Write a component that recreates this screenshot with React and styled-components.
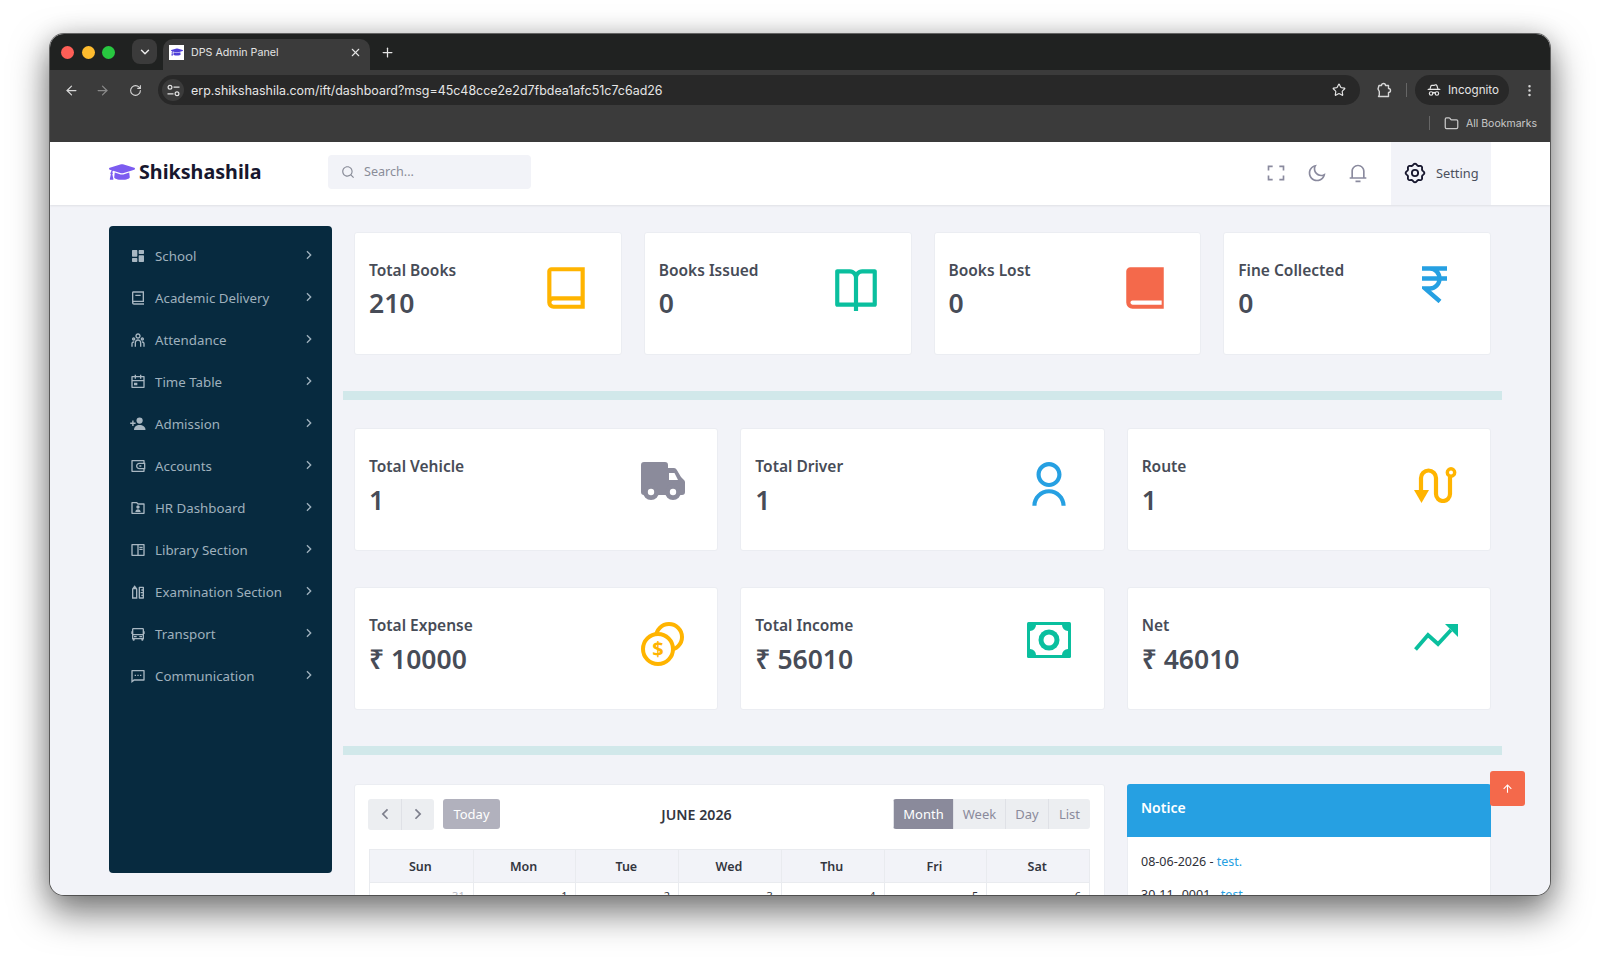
import React from 'react';
import styled, { createGlobalStyle } from 'styled-components';
import {
  RiDashboardFill, RiBook2Line, RiTeamLine, RiCalendarEventLine, RiWallet3Line,
  RiFolderUserLine, RiBookReadLine, RiPencilRulerLine, RiBusLine, RiMessage2Line, RiArrowRightSLine,
  RiArrowLeftSLine, RiSearchLine, RiFullscreenLine, RiMoonLine, RiNotification3Line,
  RiBookOpenLine, RiUserLine, RiArrowUpLine,
} from 'react-icons/ri';
import { FaGraduationCap } from 'react-icons/fa';
import { ArrowLeft, ArrowRight, RotateCw, ChevronDown, X, Plus, Star, EllipsisVertical, Folder, HatGlasses } from 'lucide-react';

const Global = createGlobalStyle`
  html, body { margin: 0; padding: 0; background: #fff; }
  body { height: 961px; overflow: hidden; font-family: "Noto Sans", "Open Sans", sans-serif; }
  * { box-sizing: border-box; }
`;

const Stage = styled.div`
  padding: 34px 50px 0;
  height: 961px;
  overflow: hidden;
`;
const Win = styled.div`
  position: relative;
  width: 1500px;
  height: 861px;
  border-radius: 14px;
  overflow: hidden;
  background: #f2f3f8;
`;
const WinShadow = styled.div`
  border-radius: 14px;
  box-shadow: 0 0 0 1px rgba(60,60,60,.75), 0 16px 36px 2px rgba(0,0,0,.52), 0 0 24px rgba(0,0,0,.12);
`;

/* browser chrome */
const TabStrip = styled.div`
  height: 36px;
  background: #202221;
  display: flex;
  align-items: flex-end;
  padding-left: 11px;
`;
const Lights = styled.div`
  display: flex;
  gap: 7.5px;
  align-self: center;
  margin-top: 1px;
  width: 71px;
`;
const Light = styled.span`
  width: 13px;
  height: 13px;
  border-radius: 50%;
  background: ${p => p.$c};
`;
const TabSearch = styled.div`
  width: 25px;
  height: 25px;
  margin-bottom: 6px;
  border-radius: 8px;
  background: #3b3b3b;
  color: #e8e8e8;
  display: flex;
  align-items: center;
  justify-content: center;
`;
const Tab = styled.div`
  width: 207px;
  height: 31px;
  margin-left: 6px;
  padding: 0 8px 5px 6px;
  background: #3b3b3b;
  border-radius: 10px 10px 0 0;
  display: flex;
  align-items: center;
  color: #e4e4e4;
  font: 400 10.7px Inter, "Liberation Sans", sans-serif;
`;
const Favicon = styled.span`
  width: 15px;
  height: 15px;
  background: #fff;
  display: flex;
  align-items: center;
  justify-content: center;
  color: #4f3fd8;
  margin-right: 7px;
`;
const TabTitle = styled.span`
  flex: 1;
`;
const NewTab = styled.div`
  color: #e4e4e4;
  margin: 0 0 10px 10px;
  display: flex;
`;
const Toolbar = styled.div`
  height: 38px;
  background: #3b3b3b;
  display: flex;
  align-items: center;
  padding-top: 2px;
  color: #d6d6d6;
`;
const NavSlot = styled.div`
  width: ${p => p.$w}px;
  display: flex;
  justify-content: center;
  color: ${p => p.$dim ? '#8a8a8a' : '#d6d6d6'};
`;
const Omnibox = styled.div`
  width: 1202px;
  height: 30px;
  margin-left: 0;
  border-radius: 15px;
  background: #282828;
  display: flex;
  align-items: center;
  padding: 0 14px 0 4px;
  color: #e4e4e4;
`;
const TuneBadge = styled.span`
  width: 22px;
  height: 22px;
  border-radius: 50%;
  background: #3b3b3b;
  display: flex;
  align-items: center;
  justify-content: center;
  margin-right: 7px;
`;
const Url = styled.span`
  flex: 1;
  font: 400 12.45px Inter, "Liberation Sans", sans-serif;
  color: #e6e6e6;
`;
const ToolDivider = styled.span`
  width: 1px;
  height: 14px;
  background: #666;
`;
const IncognitoPill = styled.div`
  width: 94px;
  height: 30px;
  border-radius: 15px;
  background: #282828;
  display: flex;
  align-items: center;
  gap: 7px;
  padding-left: 12px;
  color: #e4e4e4;
  font: 400 11.6px Inter, "Liberation Sans", sans-serif;
`;
const BookmarksBar = styled.div`
  height: 34px;
  background: #3b3b3b;
  display: flex;
  justify-content: flex-end;
  align-items: center;
  padding: 0 13px 4px 0;
  color: #c9c9c9;
  font: 400 10.5px Inter, "Liberation Sans", sans-serif;
  gap: 7px;
`;
const BarDivider = styled.span`
  width: 1px;
  height: 14px;
  background: #666;
  margin-right: 7px;
`;

/* app header */
const AppHeader = styled.header`
  height: 63px;
  background: #fff;
  display: flex;
  align-items: center;
  box-shadow: 0 1px 2px rgba(0,0,0,.08);
  position: relative;
`;
const Brand = styled.div`
  width: 278px;
  padding-left: 59px;
  margin-bottom: 4px;
  display: flex;
  align-items: center;
  gap: 4px;
  font-size: 19.7px;
  font-weight: 700;
  color: #17172e;
  svg { color: #7c5cf0; }
`;
const SearchBox = styled.div`
  width: 203px;
  height: 34px;
  margin-bottom: 4px;
  background: #f2f3f8;
  border-radius: 4px;
  display: flex;
  align-items: center;
  padding-left: 13px;
  gap: 9px;
  color: #8a8d99;
  font-size: 12.6px;
`;
const HeadActions = styled.div`
  margin-left: auto;
  height: 100%;
  display: flex;
  align-items: center;
  margin-right: 59px;
`;
const HeadIcon = styled.span`
  display: flex;
  width: 41px;
  margin-bottom: 2px;
  justify-content: center;
  color: #8a8a9e;
`;
const SettingBtn = styled.div`
  width: 100px;
  height: 100%;
  margin-left: 13px;
  padding: 0 0 2px 13px;
  background: #f2f3f8;
  display: flex;
  align-items: center;
  gap: 10px;
  color: #4b4f5c;
  font-size: 12.8px;
  svg { color: #17172e; }
`;

/* body */
const Body = styled.div`
  display: flex;
  padding-left: 59px;
  align-items: flex-start;
`;
const Sidebar = styled.nav`
  width: 223px;
  height: 647px;
  flex: none;
  margin-top: 21px;
  padding-top: 9px;
  background: #072a3f;
  border-radius: 4px;
`;
const NavRow = styled.div`
  height: 42px;
  display: flex;
  align-items: center;
  padding-left: 21px;
  padding-right: 15px;
  color: #9fb1bd;
  font-size: 13.3px;
`;
const NavIcon = styled.span`
  width: 25px;
  display: flex;
  color: #a8b7c2;
`;
const NavLabel = styled.span`
  flex: 1;
`;
const NavChevron = styled.span`
  display: flex;
  margin-bottom: 2px;
`;
const Main = styled.main`
  width: 1159px;
  margin-left: 11px;
  padding: 27px 11px 0;
  flex: none;
`;
const CardRow = styled.div`
  display: grid;
  grid-template-columns: repeat(${p => p.$n}, 1fr);
  column-gap: 22px;
  margin-top: ${p => p.$top || 0}px;
`;
const Card = styled.div`
  height: 123px;
  background: #fff;
  border: 1px solid #ebedf2;
  border-radius: 3px;
  display: flex;
  justify-content: space-between;
  padding: 26px 29px 0 14px;
`;
const CardTitle = styled.div`
  font-size: 15.5px;
  font-weight: 600;
  line-height: 22px;
  color: #474c57;
`;
const CardValue = styled.div`
  font-size: 26.5px;
  font-weight: 600;
  line-height: 36px;
  margin-top: ${p => p.$top}px;
  color: #474c57;
`;
const CardIcon = styled.span`
  width: 50px;
  height: 50px;
  margin-top: ${p => p.$top}px;
  margin-right: ${p => p.$right}px;
  display: flex;
  align-items: center;
  justify-content: center;
  color: ${p => p.$c};
`;
const Divider = styled.div`
  height: 9px;
  background: #d1e8ea;
  margin: ${p => p.$top}px -11px ${p => p.$bottom}px;
`;
const Bottom = styled.div`
  display: grid;
  grid-template-columns: 751px 364px;
  column-gap: 22px;
`;
const CalendarCard = styled.div`
  height: 400px;
  background: #fff;
  border: 1px solid #ebedf2;
  border-radius: 3px;
  padding: 13px 14px;
`;
const CalToolbar = styled.div`
  display: flex;
  justify-content: space-between;
  align-items: center;
  height: 32px;
`;
const CalLeft = styled.div`
  display: flex;
  gap: 9px;
  margin-left: -1px;
`;
const Pager = styled.div`
  display: flex;
  border-radius: 3px;
  overflow: hidden;
`;
const PageBtn = styled.span`
  width: 33px;
  height: 31px;
  background: #eceef1;
  color: #7d7f8c;
  display: flex;
  align-items: center;
  justify-content: center;
  border-left: ${p => p.$sep ? '1px solid #dfe1e6' : 'none'};
`;
const TodayBtn = styled.span`
  width: 57px;
  height: 30px;
  background: #b1b1bd;
  color: #fff;
  border-radius: 3px;
  display: flex;
  align-items: center;
  justify-content: center;
  font-size: 13px;
`;
const CalTitle = styled.div`
  font-size: 14.2px;
  font-weight: 600;
  color: #33363f;
`;
const ViewGroup = styled.div`
  display: flex;
  border-radius: 3px;
  overflow: hidden;
`;
const ViewBtn = styled.span`
  width: ${p => p.$w}px;
  height: 30px;
  display: flex;
  align-items: center;
  justify-content: center;
  font-size: 13px;
  background: ${p => p.$on ? '#8a8a9b' : '#eceef1'};
  color: ${p => p.$on ? '#fff' : '#8a8a9b'};
  border-left: 1px solid #dfe1e6;
`;
const CalGrid = styled.div`
  margin-top: 19px;
  border: 1px solid #e9ebef;
  border-bottom: none;
  display: grid;
  grid-template-columns: repeat(7, 1fr);
`;
const DayHead = styled.div`
  height: 33px;
  padding-right: 2px;
  background: #f2f3f8;
  border-left: ${p => p.$first ? 'none' : '1px solid #e9ebef'};
  border-bottom: 1px solid #e9ebef;
  display: flex;
  align-items: center;
  justify-content: center;
  font-size: 12.5px;
  font-weight: 600;
  color: #33363f;
`;
const DayCell = styled.div`
  height: 80px;
  border-left: ${p => p.$first ? 'none' : '1px solid #e9ebef'};
  padding: 5px 8px;
  text-align: right;
  font-size: 11px;
  color: ${p => p.$muted ? '#b5b6c0' : '#33363f'};
`;
const NoticeCard = styled.div`
  height: 400px;
  background: #fff;
  border: 1px solid #ebedf2;
  border-top: none;
  border-radius: 3px 3px 0 0;
`;
const NoticeHead = styled.div`
  height: 53px;
  margin: 0 -1px;
  padding: 0 14px 6px;
  display: flex;
  align-items: center;
  background: #26a0e2;
  border-radius: 3px 3px 0 0;
  color: #fff;
  font-size: 14px;
  font-weight: 600;
`;
const NoticeList = styled.div`
  padding: 15px 13px;
`;
const NoticeLine = styled.div`
  line-height: 20px;
  margin-bottom: 13px;
  font-size: 12.5px;
  color: #2e3038;
  a { color: #26a0e2; text-decoration: none; }
`;
const ScrollTop = styled.div`
  position: absolute;
  left: 1440px;
  top: 737px;
  width: 35px;
  height: 35px;
  background: #f4694b;
  border-radius: 3px;
  color: #fff;
  display: flex;
  align-items: center;
  justify-content: center;
`;

/* drawn icons */
const BookOutline = () => (
  <svg width="50" height="50" viewBox="0 0 24 24" fill="currentColor" fillRule="evenodd">
    <path d="M5 2h16v20H6a3 3 0 0 1-3-3V4a2 2 0 0 1 2-2zM5 4v12.05c.16-.03.33-.05.5-.05H19V4zM6 18a1 1 0 0 0 0 2h13v-2z" />
  </svg>
);
const BookSolid = () => (
  <svg width="50" height="50" viewBox="0 0 24 24" fill="currentColor" fillRule="evenodd">
    <path d="M5 2h16v20H6a3 3 0 0 1-3-3V4a2 2 0 0 1 2-2zM6 18a1 1 0 0 0 0 2h14v-2z" />
  </svg>
);
const RupeeIcon = () => (
  <svg width="29" height="37" viewBox="0 0 29 37" fill="none" stroke="currentColor" strokeWidth="4.4">
    <path d="M0 2.5H25M0 12.5H25M1 2.5h7a9.5 10 0 0 1 0 20H3L18 35.5" />
  </svg>
);
const TruckIcon = () => (
  <svg width="44" height="38" viewBox="0 0 44 38">
    <path fill="currentColor" d="M3 0H24a3 3 0 0 1 3 3V6h6a3 3 0 0 1 2.7 1.7L40 15l3 3a3 3 0 0 1 1 2.2V30a3 3 0 0 1-3 3H3a3 3 0 0 1-3-3V3a3 3 0 0 1 3-3z" />
    <path fill="#fff" d="M28 11h5.5l3.5 7h-9z" />
    <circle cx="10" cy="30" r="8" fill="currentColor" />
    <circle cx="32" cy="30" r="8" fill="currentColor" />
    <circle cx="10" cy="30" r="3.2" fill="#fff" />
    <circle cx="32" cy="30" r="3.2" fill="#fff" />
  </svg>
);
const RouteIcon = () => (
  <svg width="44" height="36" viewBox="0 0 44 36" fill="none" stroke="currentColor" strokeWidth="4.2">
    <path d="M7 25V11a7.5 7.5 0 0 1 15 0v16a7 7 0 0 0 14 0V10" />
    <circle cx="37" cy="5.5" r="3.7" strokeWidth="3.4" />
    <path d="M0 23h15L7.5 36z" fill="currentColor" stroke="none" />
  </svg>
);
const CoinsIcon = () => (
  <svg width="44" height="44" viewBox="0 0 44 44" fill="none" stroke="currentColor" strokeWidth="4">
    <circle cx="28" cy="15" r="13" />
    <circle cx="17" cy="27" r="15" fill="#fff" />
    <text x="17" y="34" textAnchor="middle" fontSize="20" fontWeight="700" fill="currentColor" stroke="none" fontFamily="Noto Sans">$</text>
  </svg>
);
const CashIcon = () => (
  <svg width="44" height="36" viewBox="0 0 44 36">
    <rect width="44" height="36" rx="1.5" fill="currentColor" />
    <path d="M9 3H35a6 6 0 0 0 6 6V27a6 6 0 0 0-6 6H9a6 6 0 0 0-6-6V9a6 6 0 0 0 6-6z" fill="#fff" />
    <circle cx="22" cy="18" r="10.5" fill="currentColor" />
    <circle cx="22" cy="18" r="5.5" fill="#fff" />
  </svg>
);
const TrendIcon = () => (
  <svg width="44" height="27" viewBox="0 0 44 27" fill="none" stroke="currentColor" strokeWidth="3.8">
    <path d="M1.5 25.5L14 11l10 9L37 6" />
    <path d="M31 0h13v13z" fill="currentColor" stroke="none" />
  </svg>
);
const gearPath = Array.from({ length: 97 }, (_, i) => {
  const t = (i / 96) * Math.PI * 2;
  const r = 9.3 + 0.9 * Math.cos(8 * t);
  return `${i ? 'L' : 'M'}${(12 + r * Math.sin(t)).toFixed(2)} ${(12 - r * Math.cos(t)).toFixed(2)}`;
}).join('') + 'z';
const GearIcon = () => (
  <svg width="22" height="22" viewBox="0 0 24 24" fill="none" stroke="currentColor" strokeWidth="2">
    <path d={gearPath} strokeLinejoin="round" />
    <circle cx="12" cy="12" r="3.4" />
  </svg>
);
const TuneIcon = () => (
  <svg width="13" height="13" viewBox="0 0 13 13" fill="none" stroke="currentColor" strokeWidth="1.2">
    <circle cx="3" cy="3.2" r="1.9" />
    <path d="M6.5 3.2H12.5M0.5 9.8H6.5" />
    <circle cx="10" cy="9.8" r="1.9" />
  </svg>
);
const ExtensionIcon = () => (
  <svg width="17" height="17" viewBox="0 0 17 17" fill="none" stroke="currentColor" strokeWidth="1.4" strokeLinejoin="round">
    <path d="M4 3.5h2.5a2 2 0 0 1 4 0H13.5v3a2 2 0 0 1 0 4v4H3.5l.8-1.5V9.5L3 7z" />
  </svg>
);
const AddUserIcon = () => (
  <svg width="16" height="16" viewBox="0 0 16 16" fill="currentColor">
    <circle cx="9.6" cy="4.6" r="3.1" />
    <path d="M4 14c0-3.2 2.5-5 5.6-5s5.9 1.8 5.9 5z" />
    <path d="M2.2 4.5h1.4v2h2v1.4h-2v2H2.2v-2h-2V6.5h2z" />
  </svg>
);

const nav = [
  [RiDashboardFill, 'School'], [RiBook2Line, 'Academic Delivery'], [RiTeamLine, 'Attendance'],
  [RiCalendarEventLine, 'Time Table'], [AddUserIcon, 'Admission'], [RiWallet3Line, 'Accounts'],
  [RiFolderUserLine, 'HR Dashboard'], [RiBookReadLine, 'Library Section'], [RiPencilRulerLine, 'Examination Section'],
  [RiBusLine, 'Transport'], [RiMessage2Line, 'Communication'],
];

const row1 = [
  ['Total Books', '210', <BookOutline />, '#ffb400', 4, 1],
  ['Books Issued', '0', <RiBookOpenLine size={50} />, '#0abf9e', 4, 1],
  ['Books Lost', '0', <BookSolid />, '#f4694b', 4, 1],
  ['Fine Collected', '0', <RupeeIcon />, '#26a0e2', 0, 0],
];
const row2 = [
  ['Total Vehicle', '1', <TruckIcon />, '#8b8b9b', 1, 0],
  ['Total Driver', '1', <RiUserLine size={50} />, '#26a0e2', 5, 1],
  ['Route', '1', <RouteIcon />, '#ffb400', 5, 0],
];
const row3 = [
  ['Total Expense', '₹ 10000', <CoinsIcon />, '#ffb400', 5, 0],
  ['Total Income', '₹ 56010', <CashIcon />, '#0abf9e', 1, 1],
  ['Net', '₹ 46010', <TrendIcon />, '#0abf9e', -2, 0],
];

const Cards = ({ items, top, valueTop }) => (
  <CardRow $n={items.length} $top={top}>
    {items.map(([t, v, icon, c, it, right]) => (
      <Card key={t}>
        <div>
          <CardTitle>{t}</CardTitle>
          <CardValue $top={valueTop}>{v}</CardValue>
        </div>
        <CardIcon $c={c} $top={it} $right={right}>{icon}</CardIcon>
      </Card>
    ))}
  </CardRow>
);

export default function App() {
  return (
    <Stage>
      <Global />
      <WinShadow>
        <Win>
          <TabStrip>
            <Lights>
              <Light $c="#ff5f57" /><Light $c="#febc2e" /><Light $c="#28c840" />
            </Lights>
            <TabSearch><ChevronDown size={14} strokeWidth={2.5} /></TabSearch>
            <Tab>
              <Favicon><FaGraduationCap size={12} /></Favicon>
              <TabTitle>DPS Admin Panel</TabTitle>
              <X size={13} />
            </Tab>
            <NewTab><Plus size={15} /></NewTab>
          </TabStrip>
          <Toolbar>
            <NavSlot $w={42}><ArrowLeft size={15} /></NavSlot>
            <NavSlot $w={21} $dim><ArrowRight size={15} /></NavSlot>
            <NavSlot $w={45}><RotateCw size={13} /></NavSlot>
            <Omnibox>
              <TuneBadge><TuneIcon /></TuneBadge>
              <Url>erp.shikshashila.com/ift/dashboard?msg=45c48cce2e2d7fbdea1afc51c7c6ad26</Url>
              <Star size={14} />
            </Omnibox>
            <NavSlot $w={46}><ExtensionIcon /></NavSlot>
            <ToolDivider />
            <NavSlot $w={8} />
            <IncognitoPill><HatGlasses size={14} />Incognito</IncognitoPill>
            <NavSlot $w={40}><EllipsisVertical size={15} /></NavSlot>
          </Toolbar>
          <BookmarksBar>
            <BarDivider />
            <Folder size={15} />
            All Bookmarks
          </BookmarksBar>
          <AppHeader>
            <Brand>
              <FaGraduationCap size={26} />
              Shikshashila
            </Brand>
            <SearchBox><RiSearchLine size={14} />Search...</SearchBox>
            <HeadActions>
              <HeadIcon><RiFullscreenLine size={20} /></HeadIcon>
              <HeadIcon><RiMoonLine size={20} /></HeadIcon>
              <HeadIcon><RiNotification3Line size={20} /></HeadIcon>
              <SettingBtn><GearIcon />Setting</SettingBtn>
            </HeadActions>
          </AppHeader>
          <Body>
            <Sidebar>
              {nav.map(([I, label]) => (
                <NavRow key={label}>
                  <NavIcon><I size={16} /></NavIcon>
                  <NavLabel>{label}</NavLabel>
                  <NavChevron><RiArrowRightSLine size={16} /></NavChevron>
                </NavRow>
              ))}
            </Sidebar>
            <Main>
              <Cards items={row1} valueTop={4} />
              <Divider $top={36} $bottom={28} />
              <Cards items={row2} valueTop={5} />
              <Cards items={row3} top={36} valueTop={5} />
              <Divider $top={36} $bottom={29} />
              <Bottom>
                <CalendarCard>
                  <CalToolbar>
                    <CalLeft>
                      <Pager>
                        <PageBtn><RiArrowLeftSLine size={20} /></PageBtn>
                        <PageBtn $sep><RiArrowRightSLine size={20} /></PageBtn>
                      </Pager>
                      <TodayBtn>Today</TodayBtn>
                    </CalLeft>
                    <CalTitle>JUNE 2026</CalTitle>
                    <ViewGroup>
                      <ViewBtn $w={60} $on>Month</ViewBtn>
                      <ViewBtn $w={52}>Week</ViewBtn>
                      <ViewBtn $w={43}>Day</ViewBtn>
                      <ViewBtn $w={42}>List</ViewBtn>
                    </ViewGroup>
                  </CalToolbar>
                  <CalGrid>
                    {['Sun', 'Mon', 'Tue', 'Wed', 'Thu', 'Fri', 'Sat'].map((d, i) => (
                      <DayHead key={d} $first={i === 0}>{d}</DayHead>
                    ))}
                    {['31', '1', '2', '3', '4', '5', '6'].map((d, i) => (
                      <DayCell key={d} $first={i === 0} $muted={i === 0}>{d}</DayCell>
                    ))}
                  </CalGrid>
                </CalendarCard>
                <NoticeCard>
                  <NoticeHead>Notice</NoticeHead>
                  <NoticeList>
                    <NoticeLine>08-06-2026 - <a>test.</a></NoticeLine>
                    <NoticeLine>30-11--0001 - <a>test.</a></NoticeLine>
                  </NoticeList>
                </NoticeCard>
              </Bottom>
            </Main>
          </Body>
          <ScrollTop><RiArrowUpLine size={13} /></ScrollTop>
        </Win>
      </WinShadow>
    </Stage>
  );
}
